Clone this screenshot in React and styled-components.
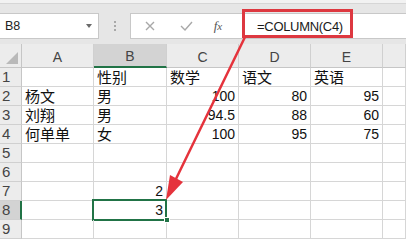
import React from "react";
import styled, { createGlobalStyle } from "styled-components";

const Global = createGlobalStyle`
  html, body { margin: 0; padding: 0; background: #ffffff; overflow: hidden; }
  * { box-sizing: border-box; }
`;

const Page = styled.div`
  position: relative;
  width: 406px;
  height: 240px;
  overflow: hidden;
  font-family: "Liberation Sans", "Noto Sans CJK SC", sans-serif;
  background: #fff;
`;

const Toolbar = styled.div`
  height: 44px;
  background: #e6e6e6;
  border-top: 3px solid #f2f2f2;
  box-shadow: inset 0 1px 0 #d6d6d6;
  display: flex;
  align-items: flex-start;
  padding-top: 10px;
`;

const NameBox = styled.div`
  width: 99px;
  height: 26px;
  background: #fff;
  border: 1px solid #c8c8c8;
  border-left: none;
  display: flex;
  align-items: center;
  justify-content: space-between;
  padding: 0 6px 0 5px;
  font-size: 12.5px;
  color: #222;
`;

const Caret = styled.span`
  width: 0;
  height: 0;
  border-left: 3.5px solid transparent;
  border-right: 3.5px solid transparent;
  border-top: 4px solid #6a6a6a;
`;

const Dots = styled.div`
  width: 31px;
  height: 26px;
  display: flex;
  flex-direction: column;
  align-items: center;
  justify-content: center;
  gap: 2px;
  & > i {
    width: 2px;
    height: 2px;
    background: #a8a8a8;
    display: block;
  }
`;

const FormulaBox = styled.div`
  flex: 1;
  height: 26px;
  background: #fff;
  border: 1px solid #c8c8c8;
  border-right: none;
  display: flex;
  align-items: center;
`;

const IconBtn = styled.span`
  width: ${(p) => p.$w}px;
  height: 24px;
  display: flex;
  align-items: center;
  justify-content: center;
  color: #a8a8a8;
`;

const Fx = styled.span`
  width: 30px;
  display: flex;
  align-items: center;
  justify-content: center;
  font-family: "Liberation Serif", serif;
  font-style: italic;
  font-size: 13px;
  color: #555;
  & > sub { font-size: 11px; vertical-align: baseline; }
`;

const FormulaText = styled.span`
  padding-left: 24px;
  font-size: 13px;
  color: #1a1a1a;
  letter-spacing: -0.3px;
`;

const Grid = styled.div`
  display: grid;
  grid-template-columns: 22px 72px 73px 72px 72px 72px 1fr;
  grid-template-rows: 24px repeat(9, 19px);
`;

const Cell = styled.div`
  position: relative;
  border-right: 1px solid #d6d6d6;
  border-bottom: 1px solid #d6d6d6;
  display: flex;
  align-items: flex-end;
  justify-content: ${(p) => (p.$num ? "flex-end" : "flex-start")};
  padding: 0 3px 0 3px;
  font-size: ${(p) => (p.$num ? "14px" : "15px")};
  line-height: 17px;
  color: #111;
  white-space: nowrap;
`;

const Selected = styled(Cell)`
  &::after {
    content: "";
    position: absolute;
    left: -2px;
    top: -2px;
    right: -1px;
    bottom: -2px;
    border: 2px solid #217346;
    pointer-events: none;
  }
`;

const Handle = styled.span`
  position: absolute;
  right: -4px;
  bottom: -4px;
  width: 6px;
  height: 6px;
  background: #217346;
  border: 1px solid #fff;
  z-index: 2;
`;

const ColHead = styled.div`
  background: ${(p) => (p.$active ? "#d3d3d3" : "#ececec")};
  border-right: 1px solid #d0d0d0;
  border-bottom: ${(p) => (p.$active ? "2px solid #217346" : "1px solid #c6c6c6")};
  display: flex;
  align-items: flex-end;
  justify-content: center;
  font-size: 14px;
  line-height: 20px;
  color: #444;
`;

const Corner = styled.div`
  background: #ececec;
  border-right: 1px solid #c6c6c6;
  border-bottom: 1px solid #c6c6c6;
  position: relative;
  &::after {
    content: "";
    position: absolute;
    right: 3px;
    bottom: 3px;
    width: 0;
    height: 0;
    border-left: 12px solid transparent;
    border-bottom: 12px solid #b9b9b9;
  }
`;

const RowHead = styled.div`
  background: ${(p) => (p.$active ? "#d3d3d3" : "#ececec")};
  border-right: ${(p) => (p.$active ? "2px solid #217346" : "1px solid #c6c6c6")};
  border-bottom: 1px solid #d0d0d0;
  display: flex;
  align-items: flex-end;
  padding-left: 2px;
  font-size: 15px;
  line-height: 18px;
  color: #444;
`;

const Callout = styled.div`
  position: absolute;
  left: 242px;
  top: 9px;
  width: 111px;
  height: 29px;
  border: 3px solid #dd3840;
  pointer-events: none;
`;

const Overlay = styled.svg`
  position: absolute;
  left: 0;
  top: 0;
  pointer-events: none;
`;

const cols = ["A", "B", "C", "D", "E", ""];
const data = [
  ["", "性别", "数学", "语文", "英语", ""],
  ["杨文", "男", 100, 80, 95, ""],
  ["刘翔", "男", 94.5, 88, 60, ""],
  ["何单单", "女", 100, 95, 75, ""],
  ["", "", "", "", "", ""],
  ["", "", "", "", "", ""],
  ["", 2, "", "", "", ""],
  ["", 3, "", "", "", ""],
  ["", "", "", "", "", ""],
];

export default function App() {
  return (
    <Page>
      <Global />
      <Toolbar>
        <NameBox>
          <span>B8</span>
          <Caret />
        </NameBox>
        <Dots>
          <i />
          <i />
          <i />
        </Dots>
        <FormulaBox>
          <IconBtn $w={38}>
            <svg width="10" height="10" viewBox="0 0 10 10">
              <path d="M1 1 L9 9 M9 1 L1 9" stroke="currentColor" strokeWidth="1.4" fill="none" />
            </svg>
          </IconBtn>
          <IconBtn $w={34}>
            <svg width="13" height="10" viewBox="0 0 13 10">
              <path d="M1 5 L5 9 L12 1" stroke="currentColor" strokeWidth="1.4" fill="none" />
            </svg>
          </IconBtn>
          <Fx>
            f<sub>x</sub>
          </Fx>
          <FormulaText>=COLUMN(C4)</FormulaText>
        </FormulaBox>
      </Toolbar>
      <Grid>
        <Corner />
        {cols.map((c, i) => (
          <ColHead key={"h" + i} $active={c === "B"}>
            {c}
          </ColHead>
        ))}
        {data.map((row, r) => (
          <React.Fragment key={r}>
            <RowHead $active={r === 7}>{r + 1}</RowHead>
            {row.map((v, c) => {
              const num = typeof v === "number";
              if (r === 7 && c === 1) {
                return (
                  <Selected key={c} $num={num}>
                    {v}
                    <Handle />
                  </Selected>
                );
              }
              return (
                <Cell key={c} $num={num}>
                  {v}
                </Cell>
              );
            })}
          </React.Fragment>
        ))}
      </Grid>
      <Callout />
      <Overlay width="406" height="240" viewBox="0 0 406 240">
        <line x1="245" y1="37" x2="174" y2="183" stroke="#e5333c" strokeWidth="2.5" strokeLinecap="round" />
        <polygon points="166,200 170,175 183,182" fill="#e5333c" />
      </Overlay>
    </Page>
  );
}
